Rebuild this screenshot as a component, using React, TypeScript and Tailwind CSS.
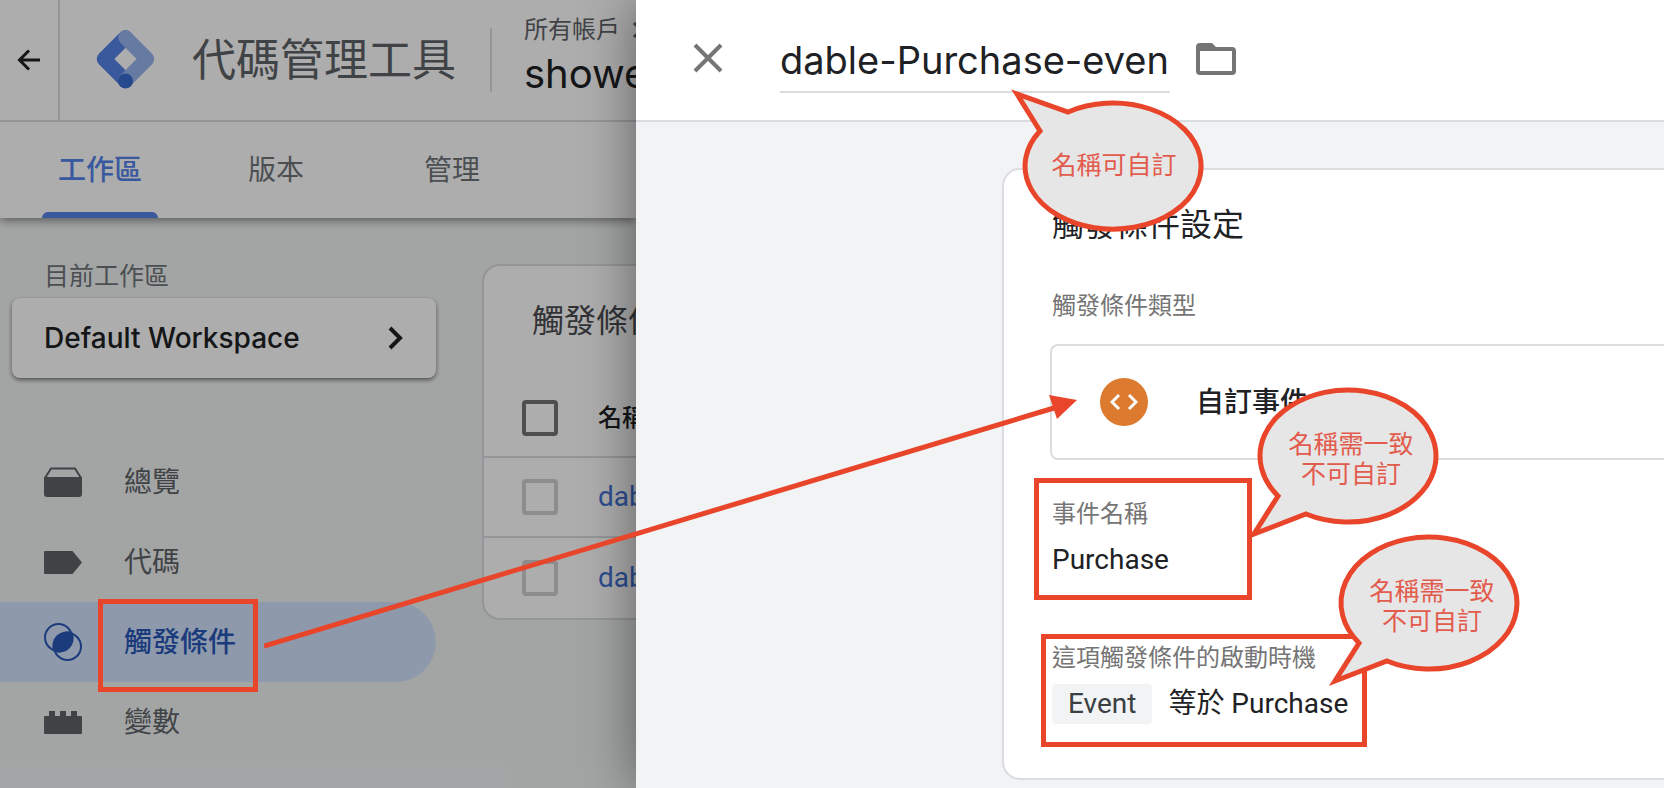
import type { ReactNode } from "react";

const navItems = [
  { label: "總覽", icon: "overview", active: false },
  { label: "代碼", icon: "tag", active: false },
  { label: "觸發條件", icon: "trigger", active: true },
  { label: "變數", icon: "variable", active: false },
];

const tabs = [
  { label: "工作區", active: true },
  { label: "版本", active: false },
  { label: "管理", active: false },
];

const rows = [
  { id: 1, name: "dable-Purchase" },
  { id: 2, name: "dable-ViewContent" },
];

function NavIcon({ name }: { name: string }) {
  return (
    <svg width="38" height="40" viewBox="0 0 38 40" fill="currentColor" aria-hidden="true">
      {name === "overview" && (
        <>
          <path d="M1 16 L7 6.5 H31 L37 16" fill="none" stroke="currentColor" strokeWidth="2" />
          <path d="M0 15 H38 V32 a3 3 0 0 1 -3 3 H3 a3 3 0 0 1 -3 -3 Z" />
        </>
      )}
      {name === "tag" && <path d="M1 9 H28.5 L38 20.500 L28.500 32 H1 a1 1 0 0 1 -1 -1 V10 a1 1 0 0 1 1 -1 Z" />}
      {name === "trigger" && (
        <>
          <circle cx="14.500" cy="15.500" r="13.500" fill="none" stroke="currentColor" strokeWidth="2" />
          <circle cx="23.500" cy="24.500" r="13.500" fill="none" stroke="currentColor" strokeWidth="2" />
          <path d="M28.500 10.500 A14.500 14.500 0 0 1 9.500 29.500 A14.500 14.500 0 0 1 28.500 10.500 Z" />
        </>
      )}
      {name === "variable" && (
        <path d="M1 14 H5 V9 H11 V14 H16 V9 H22 V14 H27 V9 H33 V14 H37 a1 1 0 0 1 1 1 V31 a1 1 0 0 1 -1 1 H1 a1 1 0 0 1 -1 -1 V15 a1 1 0 0 1 1 -1 Z" />
      )}
    </svg>
  );
}

function Logo() {
  return (
    <svg width="60" height="60" viewBox="0 0 60 60" fill="none" strokeWidth="14.500" strokeLinecap="round" strokeLinejoin="round" aria-hidden="true">
      <path d="M29.500 7.500 L8 29 L29.500 50.500" stroke="#5684e8" />
      <path d="M29.500 7.500 L51 29 L29.500 50.500" stroke="#99b4ee" />
      <circle cx="29.500" cy="51" r="7.500" fill="#396cd0" />
    </svg>
  );
}

function Bubble({ className, path, children }: { className: string; path: string; children: ReactNode }) {
  return (
    <div className={`absolute flex h-[136px] w-[180px] items-center justify-center ${className}`}>
      <svg className="absolute inset-0 overflow-visible" width="180" height="136" aria-hidden="true">
        <path d={path} fill="#e6e6e6" stroke="#e8452b" strokeWidth="5" />
      </svg>
      <p className="relative text-center text-[25px] leading-[30px] text-[#e25b4d]">{children}</p>
    </div>
  );
}

const lowerBubble = "M17 105 A88 66 0 1 1 45 123 L-7 143 Z";

function Workspace() {
  return (
    <section className="relative flex w-[636px] shrink-0 flex-col overflow-hidden bg-[#f1f3f4]">
      <header className="relative bg-white shadow-[0_2px_10px_rgba(0,0,0,0.5)]">
        <div className="flex h-[122px] border-b-2 border-[#dadce0]">
          <button aria-label="返回" className="flex w-15 shrink-0 items-center justify-center border-r-2 border-[#dadce0]">
            <svg width="24" height="24" viewBox="0 0 24 24" fill="none" stroke="#202124" strokeWidth="3" aria-hidden="true">
              <path d="M23 12 H3 M12 2.500 L2.500 12 L12 21.500" />
            </svg>
          </button>
          <div className="flex w-[430px] shrink-0 items-center pl-9">
            <Logo />
            <span className="ml-9 whitespace-nowrap text-[44px] leading-[60px] text-[#5f6368]">代碼管理工具</span>
          </div>
          <div className="my-auto h-16 w-0.5 shrink-0 bg-[#dadce0]" />
          <div className="flex flex-col pl-8 pt-3">
            <span className="flex items-center gap-3 whitespace-nowrap text-2xl leading-9 text-[#5f6368]">
              所有帳戶
              <svg width="12" height="18" viewBox="0 0 12 18" fill="none" stroke="currentColor" strokeWidth="3" aria-hidden="true">
                <path d="M2 2 L9 9 L2 16" />
              </svg>
            </span>
            <span className="text-[40px] leading-[52px] text-[#202124]">shower</span>
          </div>
        </div>
        <nav className="flex h-24 pl-[42px]">
          {tabs.map((tab) => (
            <a
              key={tab.label}
              href="#"
              className={`relative mr-[60px] flex min-w-[116px] items-center justify-center text-[28px] ${
                tab.active ? "font-medium text-[#5382ea]" : "text-[#70757a]"
              }`}
            >
              {tab.label}
              {tab.active && <span className="absolute inset-x-0 bottom-0 h-1.5 rounded-t-md bg-[#5684e8]" />}
            </a>
          ))}
        </nav>
      </header>

      <div className="flex grow">
        <aside className="w-[436px] shrink-0 pt-10">
          <p className="pl-11 text-[25px] leading-9 text-[#70757a]">目前工作區</p>
          <button className="ml-3 mt-1 flex h-20 w-[424px] items-center justify-between rounded-lg bg-white pl-8 pr-8 text-[28px] font-medium text-[#202124] shadow-[0_2px_4px_rgba(0,0,0,0.5)]">
            Default Workspace
            <svg width="16" height="26" viewBox="0 0 16 26" fill="none" stroke="currentColor" strokeWidth="4" aria-hidden="true">
              <path d="M2 3 L12 13 L2 23" />
            </svg>
          </button>
          <nav className="mt-16">
            {navItems.map((item) => (
              <a
                key={item.label}
                href="#"
                className={`flex h-20 items-center gap-[42px] rounded-r-full pl-11 text-[28px] ${
                  item.active ? "bg-[#d2e3fc] font-medium text-[#2a58b8]" : "text-[#5f6368]"
                }`}
              >
                <NavIcon name={item.icon} />
                {item.label}
              </a>
            ))}
          </nav>
        </aside>

        {/* Trigger list, runs on underneath the drawer */}
        <div className="ml-[46px] mt-[46px] h-[356px] w-[800px] shrink-0 rounded-[18px] border-2 border-[#dadce0] bg-white">
          <h2 className="h-[113px] pl-12 pt-7 text-[32px] leading-[54px] text-[#4a4c50]">觸發條件</h2>
          <table className="w-full border-collapse text-left">
            <thead>
              <tr className="h-[78px] border-b-2 border-[#dadce0]">
                <th className="w-[114px] pl-[38px]">
                  <input type="checkbox" aria-label="全選" className="block size-9 appearance-none rounded border-4 border-[#757575]" />
                </th>
                <th className="text-2xl font-medium text-[#202124]">名稱</th>
              </tr>
            </thead>
            <tbody>
              {rows.map((row) => (
                <tr key={row.id} className="h-20 border-b-2 border-[#dadce0] last:border-b-0">
                  <td className="pl-[38px]">
                    <input type="checkbox" aria-label={row.name} className="block size-9 appearance-none rounded border-4 border-[#d0d0d0]" />
                  </td>
                  <td className="whitespace-nowrap font-[Roboto,sans-serif] text-[28px]">
                    <a href="#" className="text-[#4272d7]">{row.name}</a>
                  </td>
                </tr>
              ))}
            </tbody>
          </table>
        </div>
      </div>

      <div className="absolute inset-0 bg-black/32" />
    </section>
  );
}

function TriggerDrawer() {
  return (
    <section className="relative flex min-w-0 grow flex-col bg-[#f1f3f4] shadow-[0_0_50px_rgba(0,0,0,0.45)]">
      <header className="flex h-[122px] items-start border-b-2 border-[#dadce0] bg-white">
        <button aria-label="關閉" className="ml-[57px] mt-[43px]">
          <svg width="30" height="30" viewBox="0 0 30 30" fill="none" stroke="#757575" strokeWidth="4" aria-hidden="true">
            <path d="M2 2 L28 28 M28 2 L2 28" />
          </svg>
        </button>
        <input
          aria-label="觸發條件名稱"
          defaultValue="dable-Purchase-even"
          className="ml-[57px] mt-7 h-[65px] w-[390px] border-b-2 border-[#dadce0] text-[38px] text-[#202124] outline-none"
        />
        <button aria-label="資料夾" className="ml-[26px] mt-[43px]">
          <svg width="40" height="32" viewBox="0 0 40 32" fill="#757575" aria-hidden="true">
            <path fillRule="evenodd" d="M4 0 H16 L20 4 H36 a4 4 0 0 1 4 4 V28 a4 4 0 0 1 -4 4 H4 a4 4 0 0 1 -4 -4 V4 a4 4 0 0 1 4 -4 Z M4 8 V28 H36 V8 Z" />
          </svg>
        </button>
      </header>

      <div className="-mr-6 ml-[366px] mt-[46px] h-[612px] rounded-[18px] border-2 border-[#dadce0] bg-white pl-12 pt-7">
        <h1 className="text-[32px] leading-[54px] text-[#202124]">觸發條件設定</h1>
        <h2 className="mt-9 text-2xl leading-9 text-[#757575]">觸發條件類型</h2>
        <button className="-ml-0.5 mt-5 flex h-[116px] w-full items-center rounded-lg border-2 border-[#dadce0] pl-12 text-[28px] font-medium text-[#202124]">
          <span className="mr-12 flex size-12 items-center justify-center rounded-full bg-[#dc7a30]">
            <svg width="28" height="18" viewBox="0 0 28 18" fill="none" stroke="white" strokeWidth="3" aria-hidden="true">
              <path d="M9 2 L2 9 L9 16 M19 2 L26 9 L19 16" />
            </svg>
          </span>
          自訂事件
        </button>
        <h2 className="mt-9 text-2xl leading-9 text-[#757575]">事件名稱</h2>
        <p className="mt-2 font-[Roboto,sans-serif] text-[28px] leading-10 text-[#202124]">Purchase</p>
        <h2 className="mt-[60px] text-2xl leading-9 text-[#757575]">這項觸發條件的啟動時機</h2>
        <p className="mt-2 flex items-center font-[Roboto,'Noto_Sans_CJK_TC',sans-serif] text-[28px] leading-10 text-[#202124]">
          <span className="mr-4 rounded bg-[#f1f3f4] px-4 text-[#3c4043]">Event</span>
          等於 Purchase
        </p>
      </div>
    </section>
  );
}

export default function App() {
  return (
    <div className="relative flex min-h-screen overflow-hidden font-[Inter,'Noto_Sans_CJK_TC',sans-serif]">
      <Workspace />
      <TriggerDrawer />

      {/* Annotations */}
      <div className="pointer-events-none absolute inset-0">
        <div className="absolute left-[98px] top-[599px] h-[93px] w-40 border-5 border-[#e8452b]" />
        <div className="absolute left-[1034px] top-[478px] h-[122px] w-[218px] border-5 border-[#e8452b]" />
        <div className="absolute left-[1041px] top-[634px] h-[113px] w-[326px] border-5 border-[#e8452b]" />
        <svg className="absolute left-[264px] top-[390px]" width="820" height="270" aria-hidden="true">
          <path d="M0 256 L790 18" stroke="#e8452b" strokeWidth="5" />
          <path d="M785 5 L813 10 L793 29 Z" fill="#e8452b" />
        </svg>
        <Bubble className="left-[1024px] top-[97px]" path="M16 34 A88 63 0 1 0 44 15 L-7 -3 Z">
          名稱可自訂
        </Bubble>
        <Bubble className="left-[1261px] top-[391px]" path={lowerBubble}>
          名稱需一致
          <br />
          不可自訂
        </Bubble>
        <Bubble className="left-[1342px] top-[538px]" path={lowerBubble}>
          名稱需一致
          <br />
          不可自訂
        </Bubble>
      </div>
    </div>
  );
}
